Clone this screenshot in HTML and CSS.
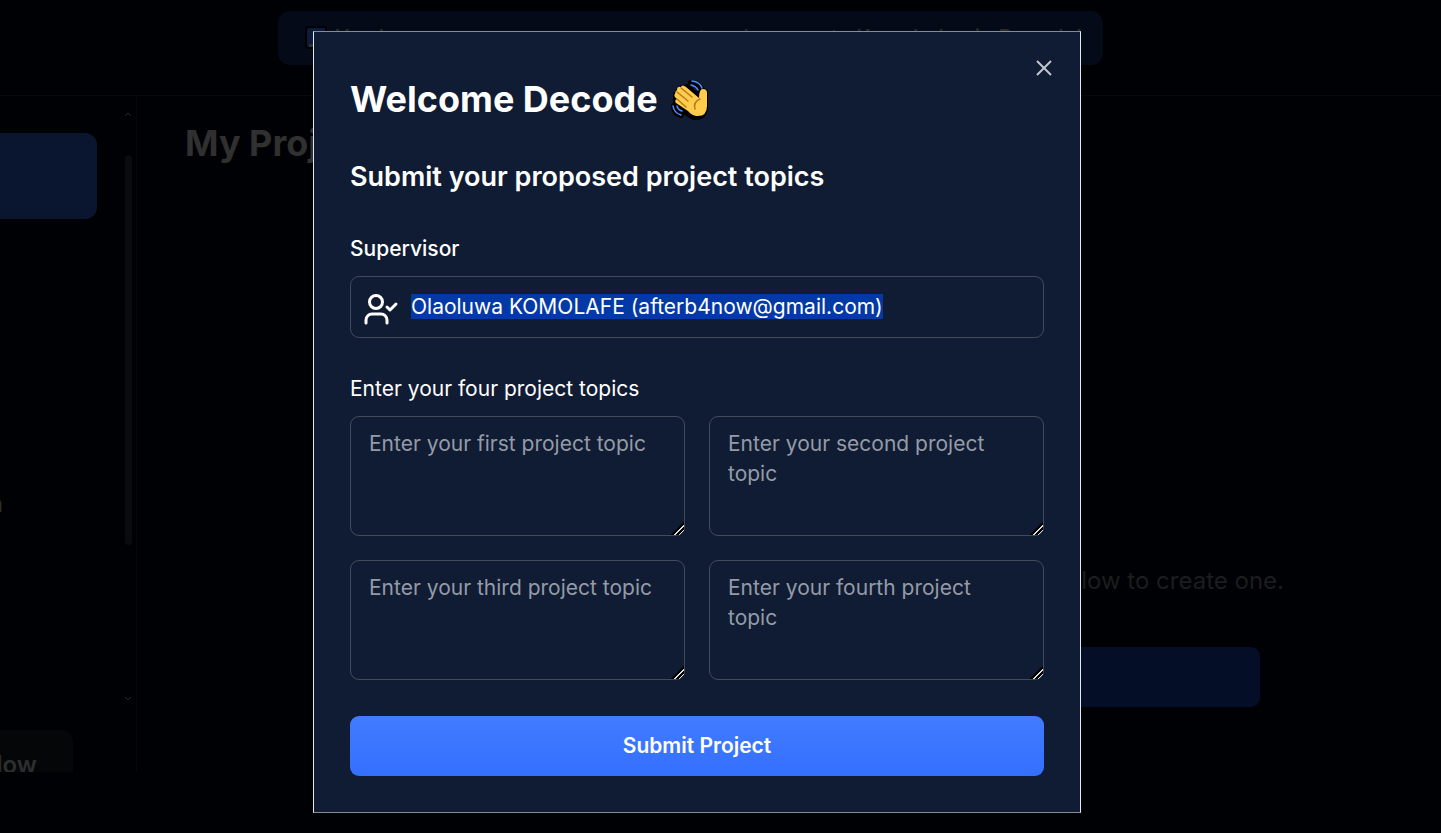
FILE: index.html
```html
<!DOCTYPE html>
<html lang="en">
<head>
    <meta charset="UTF-8">
    <meta name="viewport" content="width=device-width, initial-scale=1.0">
    <title>My Projects</title>
    <link rel="stylesheet" href="styles.css">
</head>
<body>

<div class="page">
    <header class="topbar">
        <p class="banner">
            <svg class="book" viewBox="0 0 22 24" aria-hidden="true">
                <path d="M4 1h17v21H4a3 3 0 0 1-3-3V4a3 3 0 0 1 3-3z" fill="#0c1a3c" stroke="#000" stroke-width="2"/>
                <path d="M4 18h16v3H4z" fill="#2d2e30"/>
            </svg>
            You have a new message an account and access to Knowledge in Decode!
        </p>
    </header>
    <div class="layout">
        <aside class="sidebar">
            <div class="sidebar-list">
                <div class="active-item"></div>
                <span class="sidebar-label">n</span>
            </div>
            <div class="scroll-rail">
                <svg viewBox="0 0 8 6" aria-hidden="true"><path d="M1 5l3-3 3 3"/></svg>
                <div class="scroll-track"><div class="scroll-thumb"></div></div>
                <svg viewBox="0 0 8 6" aria-hidden="true"><path d="M1 1l3 3 3-3"/></svg>
            </div>
            <div class="sidebar-card">low</div>
        </aside>
        <main class="content">
            <h1>My Projects</h1>
            <p class="empty">Click the button below to create one.</p>
            <button class="create" type="button" aria-label="Create project"></button>
        </main>
    </div>
</div>

<div class="overlay">
    <form class="dialog" role="dialog" aria-modal="true" aria-labelledby="title">
        <button class="close" type="button" aria-label="Close">
            <svg viewBox="0 0 24 24" aria-hidden="true"><path d="M5 5l14 14M19 5L5 19"/></svg>
        </button>
        <h2 id="title">Welcome Decode
            <svg class="wave" viewBox="0 0 40 42" aria-hidden="true">
                <g fill="none" stroke="#000" stroke-width="6" stroke-linecap="round" stroke-linejoin="round">
                    <path d="M19 5q8 0 11 7M2 28q0 7 7 9"/>
                    <path d="M4 17L8 11l8-2 10 10 2-7 5 2v17q-2 9-11 8Q16 37 4 25z"/>
                </g>
                <path d="M5 12q0-4 4-3 1-3 5 0l13 11q0-9 4-9 4 0 4 4v13q0 11-11 10-5-1-8-5L4 25q-2-3 1-4-4-3-2-5 0-3 2-4z" fill="#ffcd4b"/>
                <path d="M9 10l11 9M5 14l11 9M5 21l9 8M28 21q-7 3-5 10" fill="none" stroke="#b57a1d" stroke-width="1.5" stroke-linecap="round"/>
                <path d="M20 3q8 1 10 7M19 7q5 1 7 5M1 28q1 7 8 9M5 28q1 4 5 5" fill="none" stroke="#4f8fff" stroke-width="1.5" stroke-linecap="round"/>
            </svg>
        </h2>
        <h3>Submit your proposed project topics</h3>

        <label for="supervisor">Supervisor</label>
        <div class="supervisor">
            <svg viewBox="0 0 36 36" aria-hidden="true">
                <circle cx="13" cy="13" r="6.5"/>
                <path d="M3 34v-3a6 6 0 0 1 6-6h9a6 6 0 0 1 6 6v3M24 18l3 3 6-6"/>
            </svg>
            <input type="text" id="supervisor" value="Olaoluwa KOMOLAFE (afterb4now@gmail.com)" readonly autofocus>
        </div>

        <label class="topics-label" for="topic1">Enter your four project topics</label>
        <div class="topics">
            <textarea id="topic1" placeholder="Enter your first project topic"></textarea>
            <textarea aria-label="Second topic" placeholder="Enter your second project topic"></textarea>
            <textarea aria-label="Third topic" placeholder="Enter your third project topic"></textarea>
            <textarea aria-label="Fourth topic" placeholder="Enter your fourth project topic"></textarea>
        </div>
        <button class="submit" type="submit">Submit Project</button>
    </form>
</div>

<script>
    document.getElementById("supervisor").select();
</script>

</body>
</html>
```

FILE: styles.css
```css
* {
    box-sizing: border-box;
}
body {
    margin: 0;
    font-family: Inter, sans-serif;
    font-size: 21px;
    line-height: 30px;
    color: #fff;
    background-color: #000104;
    overflow: hidden;
}
h1, h2, h3, p {
    margin: 0;
}
.page {
    height: 100vh;
    display: flex;
    flex-direction: column;
    padding-bottom: 61px;
}
.topbar {
    height: 96px;
    padding: 11px 60px 0 0;
    border-bottom: 1px solid #07080b;
}
.banner {
    display: flex;
    align-items: center;
    gap: 8px;
    max-width: 825px;
    margin: 0 auto;
    padding: 0 24px 0 27px;
    height: 54px;
    border-radius: 12px;
    background-color: #040a18;
    color: #2c2b28;
    font-weight: 500;
    white-space: nowrap;
}
.book {
    flex-shrink: 0;
    width: 22px;
    height: 24px;
}
.layout {
    flex: 1;
    min-height: 0;
    display: flex;
}
.sidebar {
    width: 137px;
    flex-shrink: 0;
    border-right: 1px solid #07080b;
    display: grid;
    grid-template-columns: 1fr 8px;
    grid-template-rows: 1fr auto;
    padding-right: 4px;
    overflow: hidden;
}
.sidebar-list {
    padding-top: 37px;
}
.active-item {
    width: 97px;
    height: 86px;
    border-radius: 0 12px 12px 0;
    background-color: #0a1630;
}
.sidebar-label {
    display: flex;
    justify-content: flex-end;
    width: 3px;
    margin-top: 270px;
    color: #2d2e2e;
    font-size: 24px;
    font-weight: 600;
}
.scroll-rail {
    display: flex;
    flex-direction: column;
    padding: 15px 0 28px;
}
.scroll-rail svg {
    width: 8px;
    height: 6px;
    fill: none;
    stroke: #242527;
}
.scroll-track {
    flex: 1;
    padding-top: 38px;
}
.scroll-thumb {
    width: 7px;
    height: 72%;
    margin-left: auto;
    border-radius: 4px;
    background-color: #0a0b0d;
}
.sidebar-card {
    grid-column: 1 / 3;
    display: flex;
    justify-content: flex-end;
    width: 73px;
    height: 42px;
    padding: 20px 36px 0 0;
    border-radius: 0 12px 0 0;
    background-color: #040608;
    color: #2d2e2e;
    font-size: 24px;
    font-weight: 600;
}
.content {
    flex: 1;
    padding: 23px 157px 0 48px;
    display: flex;
    flex-direction: column;
}
.content h1 {
    font-size: 36px;
    line-height: 48px;
    color: #2f302f;
}
.empty {
    margin-top: 396px;
    font-size: 24px;
    line-height: 36px;
    text-align: right;
    color: #1c1d1e;
}
.create {
    width: 400px;
    height: 60px;
    margin: 48px 24px 0 auto;
    border: none;
    border-radius: 9px;
    background-color: #050e27;
}
.overlay {
    position: fixed;
    inset: 0;
    display: flex;
    align-items: center;
    justify-content: center;
    padding: 10px 47px 0 0;
}
.dialog {
    position: relative;
    display: flex;
    flex-direction: column;
    width: 768px;
    max-width: 100%;
    padding: 40px 36px 36px;
    border: 1px solid #e4e7ec;
    border-top-color: #858c99;
    border-bottom-color: #858c99;
    background-color: #101c33;
}
.close {
    position: absolute;
    top: 24px;
    right: 24px;
    width: 24px;
    height: 24px;
    padding: 0;
    border: none;
    background: none;
    cursor: pointer;
}
.close svg {
    display: block;
    width: 24px;
    height: 24px;
    fill: none;
    stroke: #c2c6cd;
    stroke-width: 2;
}
.dialog h2 {
    display: flex;
    align-items: center;
    gap: 14px;
    font-size: 36px;
    line-height: 54px;
}
.wave {
    width: 40px;
    height: 42px;
    overflow: visible;
}
.dialog h3 {
    margin-top: 30px;
    font-size: 27px;
    font-weight: 600;
    line-height: 42px;
}
.dialog label {
    margin-top: 36px;
    font-weight: 500;
}
.dialog .topics-label {
    font-weight: 400;
}
.supervisor {
    display: flex;
    align-items: center;
    gap: 12px;
    height: 62px;
    margin-top: 12px;
    padding: 0 12px;
    border: 1px solid #414b5d;
    border-radius: 9px;
}
.supervisor svg {
    flex-shrink: 0;
    width: 36px;
    height: 36px;
    fill: none;
    stroke: #fff;
    stroke-width: 3;
    stroke-linecap: round;
    stroke-linejoin: round;
}
.supervisor input {
    flex: 1;
    min-width: 0;
    padding: 0;
    border: none;
    outline: none;
    background: none;
    font: inherit;
    line-height: normal;
    color: #fff;
}
.supervisor input::selection {
    background-color: #0339a6;
    color: #fff;
}
.topics {
    display: grid;
    grid-template-columns: 1fr 1fr;
    gap: 24px;
    margin-top: 12px;
}
.topics textarea {
    display: block;
    width: 100%;
    height: 120px;
    padding: 12px 18px;
    border: 1px solid #414b5d;
    border-radius: 9px;
    background: none;
    color: #fff;
    font: inherit;
    resize: vertical;
}
.topics textarea::placeholder {
    color: #949ba7;
}
.topics textarea::-webkit-resizer {
    background: linear-gradient(135deg, transparent 12px, #000 12px 14px, #ddd 14px 15px, #000 15px 17px, #ddd 17px 18px, transparent 18px);
}
.submit {
    height: 60px;
    margin-top: 36px;
    border: none;
    border-radius: 9px;
    background: linear-gradient(#427bff, #3370ff);
    color: #fff;
    font: inherit;
    font-weight: 600;
    cursor: pointer;
}
```
